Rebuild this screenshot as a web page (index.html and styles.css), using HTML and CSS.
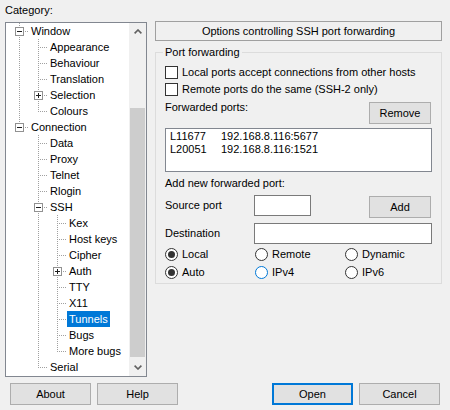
FILE: index.html
```html
<!DOCTYPE html>
<html>
<head>
<meta charset="utf-8">
<link rel="stylesheet" href="styles.css">
</head>
<body>
<svg class="defs" width="0" height="0" aria-hidden="true">
  <defs>
    <symbol id="v" viewBox="0 0 19 16"><line class="dl" x1="9.5" y1="0" x2="9.5" y2="16"/></symbol>
    <symbol id="top" viewBox="0 0 19 16"><line class="dl" x1="9.5" y1="0" x2="9.5" y2="9"/></symbol>
    <symbol id="h" viewBox="0 0 19 16"><line class="dl" x1="11" y1="8.5" x2="19" y2="8.5"/></symbol>
    <symbol id="bm" viewBox="0 0 19 16"><rect class="bx" x="5.5" y="4.5" width="8" height="8"/><line class="sg" x1="7" y1="8.5" x2="12" y2="8.5"/></symbol>
    <symbol id="bp" viewBox="0 0 19 16"><rect class="bx" x="5.5" y="4.5" width="8" height="8"/><line class="sg" x1="7" y1="8.5" x2="12" y2="8.5"/><line class="sg" x1="9.5" y1="6" x2="9.5" y2="11"/></symbol>
  </defs>
</svg>
<div class="dlg">
  <div class="main">
    <div class="left">
      <div class="cat">Category:</div>
      <div class="tree">
        <div class="list">
          <div class="row"><svg class="c"><use href="#v"/><use href="#h"/><use href="#bm"/></svg><span class="lb">Window</span></div>
          <div class="row"><svg class="c"><use href="#v"/></svg><svg class="c"><use href="#v"/><use href="#h"/></svg><span class="lb">Appearance</span></div>
          <div class="row"><svg class="c"><use href="#v"/></svg><svg class="c"><use href="#v"/><use href="#h"/></svg><span class="lb">Behaviour</span></div>
          <div class="row"><svg class="c"><use href="#v"/></svg><svg class="c"><use href="#v"/><use href="#h"/></svg><span class="lb">Translation</span></div>
          <div class="row"><svg class="c"><use href="#v"/></svg><svg class="c"><use href="#v"/><use href="#h"/><use href="#bp"/></svg><span class="lb">Selection</span></div>
          <div class="row"><svg class="c"><use href="#v"/></svg><svg class="c"><use href="#top"/><use href="#h"/></svg><span class="lb">Colours</span></div>
          <div class="row"><svg class="c"><use href="#top"/><use href="#h"/><use href="#bm"/></svg><span class="lb">Connection</span></div>
          <div class="row"><svg class="c"></svg><svg class="c"><use href="#v"/><use href="#h"/></svg><span class="lb">Data</span></div>
          <div class="row"><svg class="c"></svg><svg class="c"><use href="#v"/><use href="#h"/></svg><span class="lb">Proxy</span></div>
          <div class="row"><svg class="c"></svg><svg class="c"><use href="#v"/><use href="#h"/></svg><span class="lb">Telnet</span></div>
          <div class="row"><svg class="c"></svg><svg class="c"><use href="#v"/><use href="#h"/></svg><span class="lb">Rlogin</span></div>
          <div class="row"><svg class="c"></svg><svg class="c"><use href="#v"/><use href="#h"/><use href="#bm"/></svg><span class="lb">SSH</span></div>
          <div class="row"><svg class="c"></svg><svg class="c"><use href="#v"/></svg><svg class="c"><use href="#v"/><use href="#h"/></svg><span class="lb">Kex</span></div>
          <div class="row"><svg class="c"></svg><svg class="c"><use href="#v"/></svg><svg class="c"><use href="#v"/><use href="#h"/></svg><span class="lb">Host keys</span></div>
          <div class="row"><svg class="c"></svg><svg class="c"><use href="#v"/></svg><svg class="c"><use href="#v"/><use href="#h"/></svg><span class="lb">Cipher</span></div>
          <div class="row"><svg class="c"></svg><svg class="c"><use href="#v"/></svg><svg class="c"><use href="#v"/><use href="#h"/><use href="#bp"/></svg><span class="lb">Auth</span></div>
          <div class="row"><svg class="c"></svg><svg class="c"><use href="#v"/></svg><svg class="c"><use href="#v"/><use href="#h"/></svg><span class="lb">TTY</span></div>
          <div class="row"><svg class="c"></svg><svg class="c"><use href="#v"/></svg><svg class="c"><use href="#v"/><use href="#h"/></svg><span class="lb">X11</span></div>
          <div class="row"><svg class="c"></svg><svg class="c"><use href="#v"/></svg><svg class="c"><use href="#v"/><use href="#h"/></svg><span class="lb sel">Tunnels</span></div>
          <div class="row"><svg class="c"></svg><svg class="c"><use href="#v"/></svg><svg class="c"><use href="#v"/><use href="#h"/></svg><span class="lb">Bugs</span></div>
          <div class="row"><svg class="c"></svg><svg class="c"><use href="#v"/></svg><svg class="c"><use href="#top"/><use href="#h"/></svg><span class="lb">More bugs</span></div>
          <div class="row"><svg class="c"></svg><svg class="c"><use href="#top"/><use href="#h"/></svg><span class="lb">Serial</span></div>
        </div>
        <div class="sb">
          <div class="sbbtn"><svg class="arr" viewBox="0 0 8 5"><path d="M0.6 4.4 L4 1 L7.4 4.4"/></svg></div>
          <div class="track"><div class="thumb" style="margin-top:68px;height:249px"></div></div>
          <div class="sbbtn"><svg class="arr" viewBox="0 0 8 5"><path d="M0.6 0.6 L4 4 L7.4 0.6"/></svg></div>
        </div>
      </div>
    </div>
    <div class="right">
      <div class="hdr">Options controlling SSH port forwarding</div>
      <fieldset class="grp">
        <legend class="lg">Port forwarding</legend>
        <div class="cb first"><span class="box"></span><span>Local ports accept connections from other hosts</span></div>
        <div class="cb second"><span class="box"></span><span>Remote ports do the same (SSH-2 only)</span></div>
        <div class="fwd"><span class="lbl">Forwarded ports:</span><div class="btn side">Remove</div></div>
        <div class="lst">
          <div class="li"><span class="k">L11677</span><span>192.168.8.116:5677</span></div>
          <div class="li"><span class="k">L20051</span><span>192.168.8.116:1521</span></div>
        </div>
        <div class="addl">Add new forwarded port:</div>
        <div class="frow src"><span class="flbl">Source port</span><div class="edit short"></div><div class="btn side add">Add</div></div>
        <div class="frow dst"><span class="flbl">Destination</span><div class="edit long"></div></div>
        <div class="radios">
          <div class="rd"><span class="circ on"><span class="dot"></span></span><span>Local</span></div>
          <div class="rd"><span class="circ"></span><span>Remote</span></div>
          <div class="rd"><span class="circ"></span><span>Dynamic</span></div>
          <div class="rd"><span class="circ on"><span class="dot"></span></span><span>Auto</span></div>
          <div class="rd"><span class="circ focus"></span><span>IPv4</span></div>
          <div class="rd"><span class="circ"></span><span>IPv6</span></div>
        </div>
      </fieldset>
    </div>
  </div>
  <div class="btns">
    <div class="grpbtn">
      <div class="btn wide">About</div>
      <div class="btn wide">Help</div>
    </div>
    <div class="grpbtn">
      <div class="btn wide def">Open</div>
      <div class="btn wide">Cancel</div>
    </div>
  </div>
</div>
</body>
</html>
```

FILE: styles.css
```css
* { box-sizing: border-box; }
html, body { margin: 0; padding: 0; }
body {
  width: 450px;
  height: 410px;
  overflow: hidden;
  background: #f0f0f0;
  color: #000;
  font-family: "Liberation Sans", Arial, sans-serif;
  font-size: 11px;
}
.defs { display: block; width: 0; height: 0; overflow: hidden; }
.dl { stroke: #a0a0a0; stroke-width: 1; stroke-dasharray: 1 1; shape-rendering: crispEdges; }
.bx { fill: #fff; stroke: #919191; stroke-width: 1; shape-rendering: crispEdges; }
.sg { stroke: #1e1e1e; stroke-width: 1; shape-rendering: crispEdges; }

.dlg { display: flex; flex-direction: column; height: 410px; }
.main { display: flex; gap: 8px; padding: 2px 0 0 5px; }

.left { width: 142px; display: flex; flex-direction: column; }
.cat { height: 16px; line-height: 16px; margin-bottom: 4px; }
.tree {
  height: 355px;
  border: 1px solid #828790;
  background: #fff;
  display: flex;
}
.list { flex: 1; min-width: 0; overflow: hidden; }
.row { display: flex; align-items: center; height: 16px; padding-left: 4px; white-space: nowrap; }
.c { width: 19px; height: 16px; flex: none; display: block; }
.lb { line-height: 16px; height: 16px; padding: 0 2px; }
.lb.sel { background: #0078d7; color: #fff; }

.sb { width: 17px; flex: none; background: #f0f0f0; display: flex; flex-direction: column; }
.sbbtn { height: 17px; display: flex; align-items: center; justify-content: center; }
.arr { width: 8px; height: 5px; display: block; }
.arr path { fill: none; stroke: #606060; stroke-width: 1.6; }
.track { flex: 1; }
.thumb { margin-left: 1px; margin-right: 1px; background: #cdcdcd; }

.right { width: 287px; padding-top: 19px; }
.hdr {
  height: 20px;
  border: 1px solid #a0a0a0;
  text-align: center;
  line-height: 18px;
}
.grp {
  margin: 4px 0 0 0;
  padding: 0 9px 3px 9px;
  border: 1px solid #dcdcdc;
  min-width: 0;
}
.lg { padding: 0 2px; margin-left: -2px; line-height: 15px; }

.cb { display: flex; align-items: center; height: 16px; gap: 4px; }
.cb.first { margin-top: 4px; }
.cb.second { margin-top: 1px; }
.box { width: 13px; height: 13px; border: 1px solid #333; background: #fff; flex: none; }

.fwd { display: flex; justify-content: space-between; align-items: flex-start; margin-top: 2px; }
.lbl { line-height: 16px; }
.btn {
  height: 22px;
  border: 1px solid #adadad;
  background: #e1e1e1;
  display: flex;
  align-items: center;
  justify-content: center;
}
.btn.side { width: 62px; margin-top: 3px; margin-right: 1px; }
.btn.add { margin-left: auto; margin-top: 1px; }

.lst {
  margin-top: 4px;
  height: 44px;
  border: 1px solid #828790;
  background: #fff;
  padding: 1px 4px;
}
.li { display: flex; line-height: 13px; height: 13px; }
.k { width: 51px; }

.addl { margin-top: 3px; line-height: 16px; }
.frow { display: flex; align-items: flex-start; }
.frow.src { margin-top: 4px; }
.frow.dst { margin-top: 5px; }
.flbl { width: 89px; line-height: 21px; }
.edit { height: 21px; border: 1px solid #7a7a7a; background: #fff; }
.edit.short { width: 57px; }
.edit.long { width: 178px; }

.radios {
  margin-top: 2px;
  display: grid;
  grid-template-columns: 90px 90px 1fr;
  row-gap: 2px;
}
.rd { display: flex; align-items: center; gap: 4px; height: 16px; }
.circ {
  width: 13px;
  height: 13px;
  border: 1px solid #333;
  border-radius: 50%;
  background: #fff;
  flex: none;
  display: flex;
  align-items: center;
  justify-content: center;
}
.circ.focus { border-color: #0078d7; }
.dot { width: 7px; height: 7px; border-radius: 50%; background: #333; }

.btns { display: flex; justify-content: space-between; padding: 0 10px; margin-top: 6px; }
.grpbtn { display: flex; gap: 6px; }
.btn.wide { width: 81px; }
.btn.def { border: 2px solid #0078d7; }
```
